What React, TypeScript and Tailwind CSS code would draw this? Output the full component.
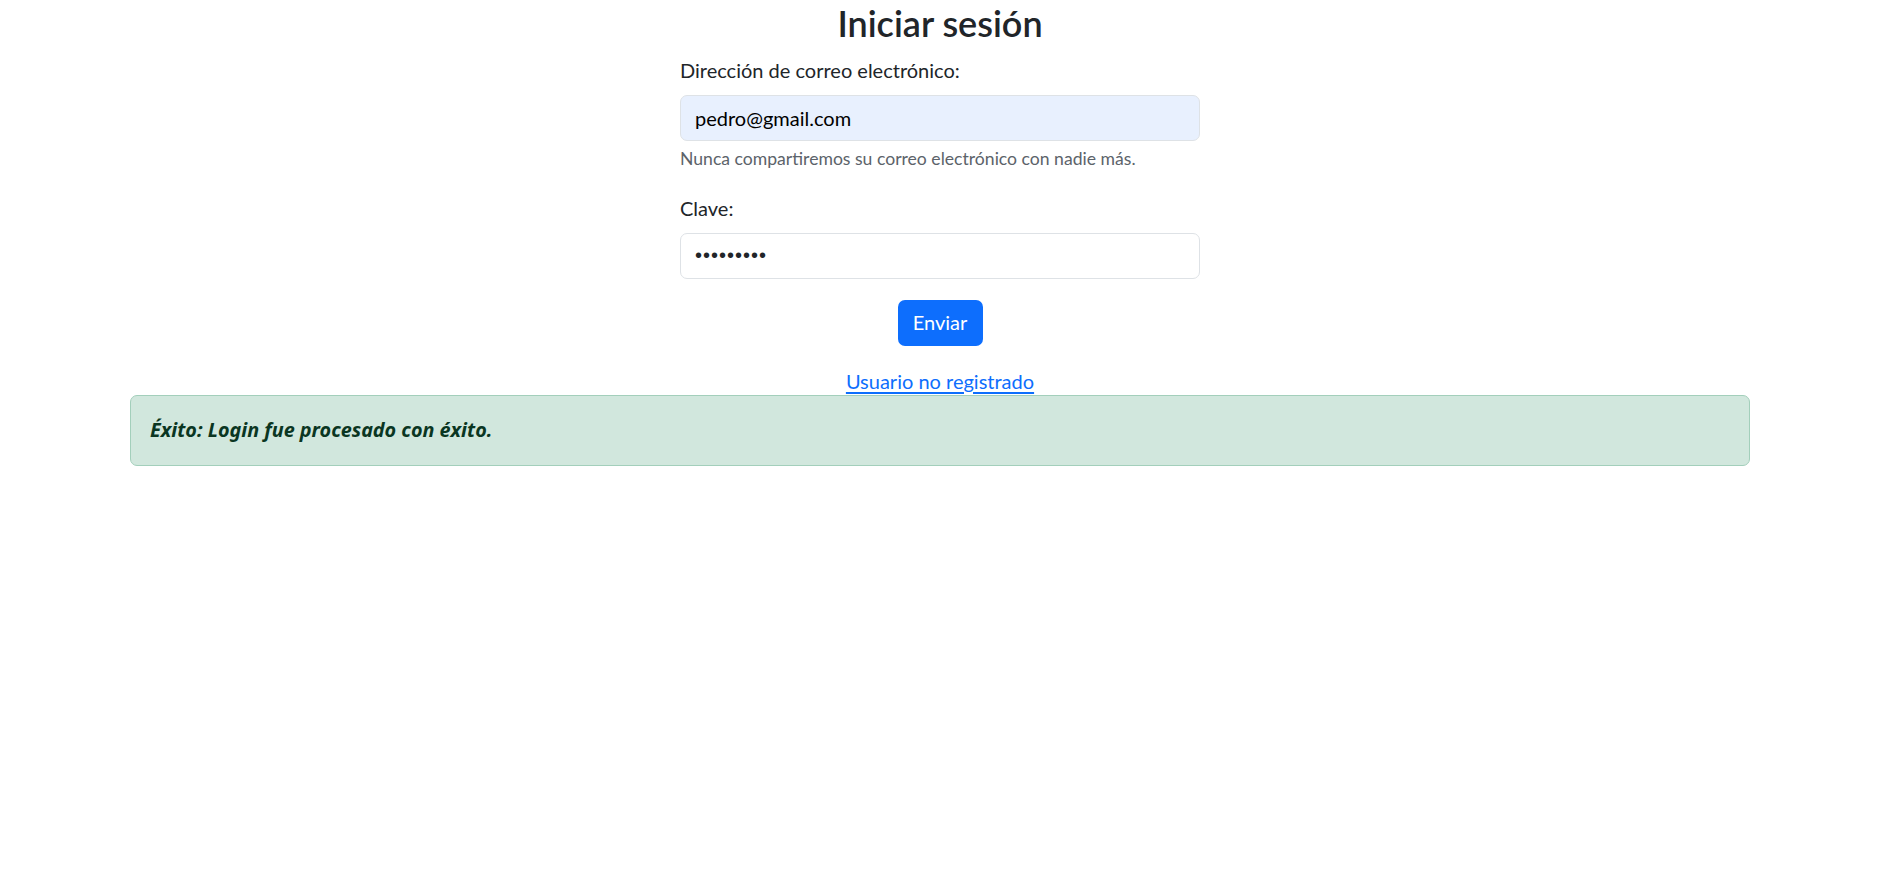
import { useState } from "react";

export default function App() {
  const [email, setEmail] = useState("pedro@gmail.com");
  const [clave, setClave] = useState("123456789");

  return (
    <div className="min-h-[892px] pr-[4px] bg-white text-[#212529] font-['Lato','Noto_Sans',sans-serif] text-[20px] leading-[28.8px]">
      <form
        className="w-[520px] mx-auto flex flex-col"
        onSubmit={(e) => e.preventDefault()}
      >
        <h2 className="text-center text-[36px] leading-[46px] font-semibold">
          Iniciar sesión
        </h2>

        <label htmlFor="email" className="mt-[10px]">
          Dirección de correo electrónico:
        </label>
        <input
          id="email"
          type="email"
          value={email}
          onChange={(e) => setEmail(e.target.value)}
          className="mt-[10px] h-[46px] px-[14px] rounded-[7px] border border-[#dee2e6] bg-[#e8f0fe] text-black outline-none"
        />
        <p className="mt-[5px] text-[17.6px] leading-[25px] text-[#5c636a]">
          Nunca compartiremos su correo electrónico con nadie más.
        </p>

        <label htmlFor="clave" className="mt-[23px]">
          Clave:
        </label>
        <input
          id="clave"
          type="password"
          value={clave}
          onChange={(e) => setClave(e.target.value)}
          className="mt-[10px] h-[46px] px-[14px] rounded-[7px] border border-[#dee2e6] bg-white text-[#212529] font-['Liberation_Sans',sans-serif] tracking-[1px] outline-none"
        />

        <div className="mt-[21px] flex justify-center">
          <button
            type="submit"
            className="h-[46px] w-[85px] rounded-[7px] bg-[#0d6efd] text-white"
          >
            Enviar
          </button>
        </div>

        <a
          href="#"
          className="mt-[21px] self-center text-[#0d6efd] underline underline-offset-[3px]"
        >
          Usuario no registrado
        </a>
      </form>

      <div className="w-[1620px] mx-auto px-[19px] py-[20px] rounded-[7px] border border-[#a3cfbb] bg-[#d1e7dd] text-[#0a3622]">
        <p className="font-['Noto_Sans',sans-serif] text-[19.8px] font-bold italic">
          Éxito: Login fue procesado con éxito.
        </p>
      </div>
    </div>
  );
}
